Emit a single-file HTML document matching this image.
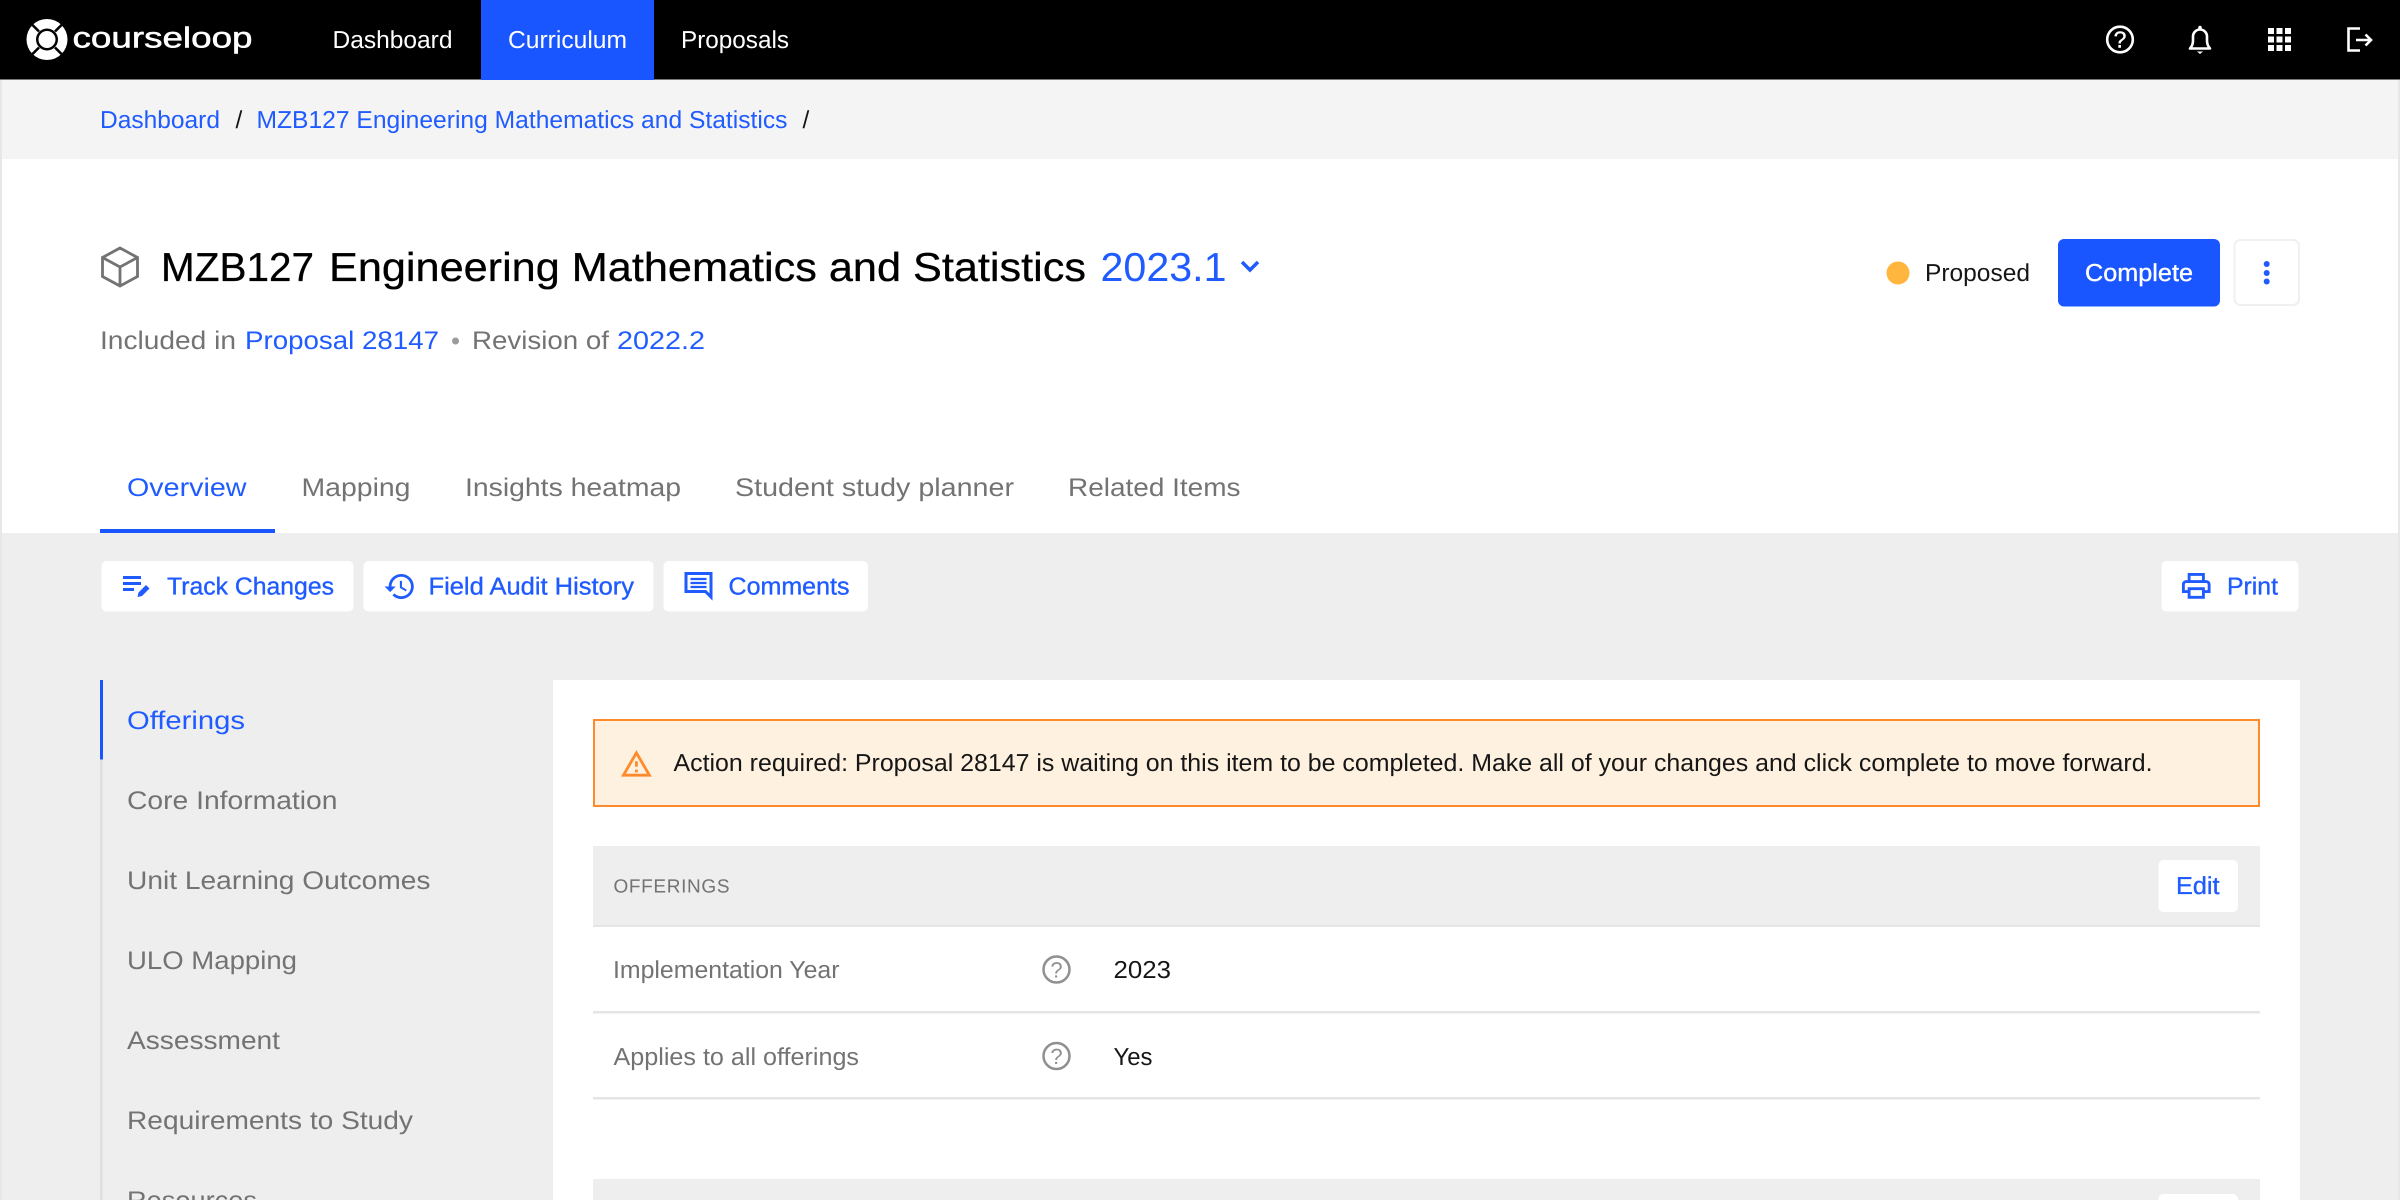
<!DOCTYPE html>
<html lang="en"><head><meta charset="utf-8"><title>MZB127 Engineering Mathematics and Statistics</title>
<style>
html,body{margin:0;padding:0;width:2400px;height:1200px;overflow:hidden;background:#ededed}
svg{display:block}
text{font-family:"Liberation Sans",Arial,sans-serif;text-rendering:geometricPrecision}
.b{fill:#1f5bff}.g{fill:#737373}.k{fill:#161616}.w{fill:#fff}
.m{stroke-width:.35px}.m.b{stroke:#1f5bff}
.nav{font-size:24.5px}.f25{font-size:25.5px}.f24{font-size:24.5px}
</style></head><body>
<svg width="2400" height="1200" viewBox="0 0 2400 1200" xmlns="http://www.w3.org/2000/svg">
<rect width="2400" height="1200" fill="#eeeeee"/>
<!-- page frame -->
<rect y="80" width="2400" height="80" fill="#f4f4f4"/>
<rect y="159" width="2400" height="374" fill="#fff"/>
<rect x="0" y="80" width="2" height="1120" fill="#e8e7e4"/>
<rect x="2398" y="80" width="2" height="1120" fill="#e8e7e4"/>
<!-- top nav -->
<rect width="2400" height="79.500" fill="#000"/>
<rect x="481" width="173" height="80" fill="#1a56ff"/>
<circle cx="47" cy="39.500" r="20.500" fill="#fff"/>
<circle cx="47" cy="39.500" r="11" fill="#000"/>
<g stroke="#000" stroke-width="2.600"><path d="M39 31.500 32 24.500M55 31.500 62 24.500M39 47.500 32 54.500M55 47.500 62 54.500"/></g>
<circle cx="47" cy="39.500" r="8.500" fill="#fff"/>
<text x="72.500" y="47.500" class="w" font-size="29" stroke="#fff" stroke-width=".5" textLength="180" lengthAdjust="spacingAndGlyphs">courseloop</text>
<text x="332.500" y="48" class="w nav" textLength="120" lengthAdjust="spacingAndGlyphs">Dashboard</text>
<text x="508" y="48" class="w nav" textLength="119" lengthAdjust="spacingAndGlyphs">Curriculum</text>
<text x="681" y="48" class="w nav" textLength="108" lengthAdjust="spacingAndGlyphs">Proposals</text>
<circle cx="2120" cy="39.500" r="12.800" fill="none" stroke="#fff" stroke-width="2.600"/>
<text x="2120" y="47.500" text-anchor="middle" class="w" font-size="23" stroke="#fff" stroke-width=".4">?</text>
<path d="M2190 48.500c2-2 3-4 3-8v-4a7 7 0 0 1 14 0v4c0 4 1 6 3 8Z" fill="none" stroke="#fff" stroke-width="2.600" stroke-linejoin="round"/>
<circle cx="2200" cy="27.500" r="1.800" fill="#fff"/><path d="M2197 51.500h6l-3 2.500z" fill="#fff"/>
<g fill="#fff">
<rect x="2268" y="28" width="6" height="6"/><rect x="2276.500" y="28" width="6" height="6"/><rect x="2285" y="28" width="6" height="6"/>
<rect x="2268" y="36.500" width="6" height="6"/><rect x="2276.500" y="36.500" width="6" height="6"/><rect x="2285" y="36.500" width="6" height="6"/>
<rect x="2268" y="45" width="6" height="6"/><rect x="2276.500" y="45" width="6" height="6"/><rect x="2285" y="45" width="6" height="6"/>
</g>
<path d="M2360 28.500H2348.500V50.500H2360M2356 40H2371M2365.500 34.500 2371 40 2365.500 45.500" fill="none" stroke="#fff" stroke-width="2.600"/>
<!-- breadcrumb -->
<text x="100" y="128" class="b f24" textLength="120" lengthAdjust="spacingAndGlyphs">Dashboard</text>
<text x="235.500" y="128" class="k f24">/</text>
<text x="256.500" y="128" class="b f24" textLength="531" lengthAdjust="spacingAndGlyphs">MZB127 Engineering Mathematics and Statistics</text>
<text x="802.500" y="128" class="k f24">/</text>
<!-- header -->
<path d="M120 248 137.500 257.500V276.500L120 286 102.500 276.500V257.500ZM102.500 257.500 120 267 137.500 257.500M120 267V286" fill="none" stroke="#737373" stroke-width="2.800"/>
<text x="161" y="281" font-size="40.500" fill="#000" stroke="#000" stroke-width=".3" textLength="153" lengthAdjust="spacingAndGlyphs">MZB127</text>
<text x="329" y="281" font-size="40.500" fill="#000" stroke="#000" stroke-width=".3" textLength="757" lengthAdjust="spacingAndGlyphs">Engineering Mathematics and Statistics</text>
<text x="1100.500" y="281" font-size="40.500" class="b" textLength="126" lengthAdjust="spacingAndGlyphs">2023.1</text>
<path d="M1242 262 1250 270 1258 262" fill="none" stroke="#1f5bff" stroke-width="3.500"/>
<text x="100" y="349" class="g f25" textLength="136" lengthAdjust="spacingAndGlyphs">Included in</text>
<text x="245" y="349" class="b f25" textLength="194" lengthAdjust="spacingAndGlyphs">Proposal 28147</text>
<circle cx="455.500" cy="341" r="3.500" fill="#9b9b9b"/>
<text x="472" y="349" class="g f25" textLength="137" lengthAdjust="spacingAndGlyphs">Revision of</text>
<text x="617" y="349" class="b f25" textLength="88" lengthAdjust="spacingAndGlyphs">2022.2</text>
<circle cx="1898" cy="273" r="11.500" fill="#ffb53e"/>
<text x="1925" y="281" class="k f24" textLength="105" lengthAdjust="spacingAndGlyphs">Proposed</text>
<rect x="2058" y="239" width="162" height="67.500" rx="6" fill="#1a56ff"/>
<text x="2085" y="281" class="w f24 m" stroke="#fff" textLength="108" lengthAdjust="spacingAndGlyphs">Complete</text>
<rect x="2234.500" y="240" width="64.500" height="65" rx="6" fill="#fff" stroke="#f0f0f0" stroke-width="2"/>
<circle cx="2266.700" cy="264" r="3" fill="#1f5bff"/><circle cx="2266.700" cy="273" r="3" fill="#1f5bff"/><circle cx="2266.700" cy="281.500" r="3" fill="#1f5bff"/>
<!-- tabs -->
<text x="127" y="496" class="b f25" textLength="119.500" lengthAdjust="spacingAndGlyphs">Overview</text>
<text x="301.500" y="496" class="g f25" textLength="109" lengthAdjust="spacingAndGlyphs">Mapping</text>
<text x="465" y="496" class="g f25" textLength="216" lengthAdjust="spacingAndGlyphs">Insights heatmap</text>
<text x="735" y="496" class="g f25" textLength="279" lengthAdjust="spacingAndGlyphs">Student study planner</text>
<text x="1068" y="496" class="g f25" textLength="172.500" lengthAdjust="spacingAndGlyphs">Related Items</text>
<rect x="100" y="529" width="175" height="4" fill="#1a56ff"/>
<!-- toolbar -->
<rect x="101.500" y="561" width="252" height="50.500" rx="5" fill="#fff"/>
<rect x="363.500" y="561" width="290" height="50.500" rx="5" fill="#fff"/>
<rect x="663.500" y="561" width="204.500" height="50.500" rx="5" fill="#fff"/>
<rect x="2161.500" y="561" width="137" height="50.500" rx="5" fill="#fff"/>
<path d="M123 577.500H141M123 583.500H141M123 589.500H134" fill="none" stroke="#1f5bff" stroke-width="3"/>
<path d="M137.500 597 138.500 592.500 146 585 149.500 588.500 142 596Z" fill="#1f5bff"/>
<text x="167" y="594.500" class="b f24 m" textLength="167" lengthAdjust="spacingAndGlyphs">Track Changes</text>
<path transform="translate(383.200 569.800) scale(1.39)" fill="#1f5bff" d="M13 3c-4.970 0-9 4.030-9 9H1l3.890 3.890.07.14L9 12H6c0-3.870 3.130-7 7-7s7 3.130 7 7-3.130 7-7 7c-1.930 0-3.680-.79-4.940-2.060l-1.420 1.420C8.270 19.990 10.510 21 13 21c4.970 0 9-4.030 9-9s-4.030-9-9-9zm-1 5v5l4.280 2.540.72-1.210-3.500-2.080V8H12z"/>
<text x="428.500" y="594.500" class="b f24 m" textLength="205.500" lengthAdjust="spacingAndGlyphs">Field Audit History</text>
<path d="M686 573.500H711V597L705.500 591.500H686Z" fill="none" stroke="#1f5bff" stroke-width="3"/>
<path d="M690.500 579H706.500M690.500 583H706.500M690.500 587H706.500" stroke="#1f5bff" stroke-width="2.300" fill="none"/>
<text x="728.500" y="594.500" class="b f24 m" textLength="121" lengthAdjust="spacingAndGlyphs">Comments</text>
<path transform="translate(2179.100 568.700) scale(1.43)" fill="#1f5bff" d="M19 8h-1V3H6v5H5c-1.660 0-3 1.340-3 3v6h4v4h12v-4h4v-6c0-1.660-1.340-3-3-3zM8 5h8v3H8V5zm8 12v2H8v-4h8v2zm2-2v-2H6v2H4v-4c0-.55.45-1 1-1h14c.55 0 1 .45 1 1v4h-2z"/>
<text x="2227" y="594.500" class="b f24 m" textLength="51" lengthAdjust="spacingAndGlyphs">Print</text>
<!-- sidebar -->
<rect x="100" y="680" width="2.500" height="520" fill="#e0dfdc"/>
<rect x="100" y="680" width="3" height="79.500" fill="#1a56ff"/>
<text x="127" y="729" class="b f25" textLength="118" lengthAdjust="spacingAndGlyphs">Offerings</text>
<text x="127" y="809" class="g f25" textLength="210.500" lengthAdjust="spacingAndGlyphs">Core Information</text>
<text x="127" y="889" class="g f25" textLength="303.500" lengthAdjust="spacingAndGlyphs">Unit Learning Outcomes</text>
<text x="127" y="969" class="g f25" textLength="170" lengthAdjust="spacingAndGlyphs">ULO Mapping</text>
<text x="127" y="1049" class="g f25" textLength="153" lengthAdjust="spacingAndGlyphs">Assessment</text>
<text x="127" y="1129" class="g f25" textLength="286" lengthAdjust="spacingAndGlyphs">Requirements to Study</text>
<text x="127" y="1209" class="g f25" textLength="130" lengthAdjust="spacingAndGlyphs">Resources</text>
<!-- panel -->
<rect x="553" y="680" width="1747" height="520" fill="#fff"/>
<rect x="594" y="720" width="1665" height="86" fill="#fef1df" stroke="#ff8a2b" stroke-width="2"/>
<path transform="translate(619.600 747.200) scale(1.4)" fill="#ff8a2b" d="M1 21h22L12 2 1 21zm3.470-2L12 5.990 19.530 19H4.470zM11 16h2v2h-2zm0-6h2v4h-2z"/>
<text x="673.500" y="771" class="k f24" textLength="1479" lengthAdjust="spacingAndGlyphs">Action required: Proposal 28147 is waiting on this item to be completed. Make all of your changes and click complete to move forward.</text>
<rect x="593" y="846" width="1667" height="80" fill="#eeeeee"/>
<rect x="593" y="925" width="1667" height="2" fill="#e5e5e5"/>
<text x="613.500" y="892.500" class="g" font-size="19" textLength="116" lengthAdjust="spacing">OFFERINGS</text>
<rect x="2158.500" y="860" width="79.500" height="52" rx="5" fill="#fff"/>
<text x="2176" y="894" class="b f24 m" textLength="43.500" lengthAdjust="spacingAndGlyphs">Edit</text>
<text x="613" y="978" class="g f24" textLength="226.500" lengthAdjust="spacingAndGlyphs">Implementation Year</text>
<circle cx="1056.500" cy="969.500" r="13" fill="none" stroke="#909090" stroke-width="2.500"/>
<text x="1056.500" y="977.500" text-anchor="middle" font-size="22" fill="#909090">?</text>
<text x="1113.500" y="978" class="k f24" textLength="57.500" lengthAdjust="spacingAndGlyphs">2023</text>
<rect x="593" y="1011" width="1667" height="2.500" fill="#e5e5e5"/>
<text x="613.500" y="1065" class="g f24" textLength="245.500" lengthAdjust="spacingAndGlyphs">Applies to all offerings</text>
<circle cx="1056.500" cy="1056" r="13" fill="none" stroke="#909090" stroke-width="2.500"/>
<text x="1056.500" y="1064" text-anchor="middle" font-size="22" fill="#909090">?</text>
<text x="1113.500" y="1065" class="k f24" textLength="39" lengthAdjust="spacingAndGlyphs">Yes</text>
<rect x="593" y="1097" width="1667" height="2.500" fill="#e5e5e5"/>
<rect x="593" y="1179" width="1667" height="21" fill="#eeeeee"/>
<rect x="2158.500" y="1194" width="79.500" height="20" rx="5" fill="#fff"/>
</svg>
</body></html>
